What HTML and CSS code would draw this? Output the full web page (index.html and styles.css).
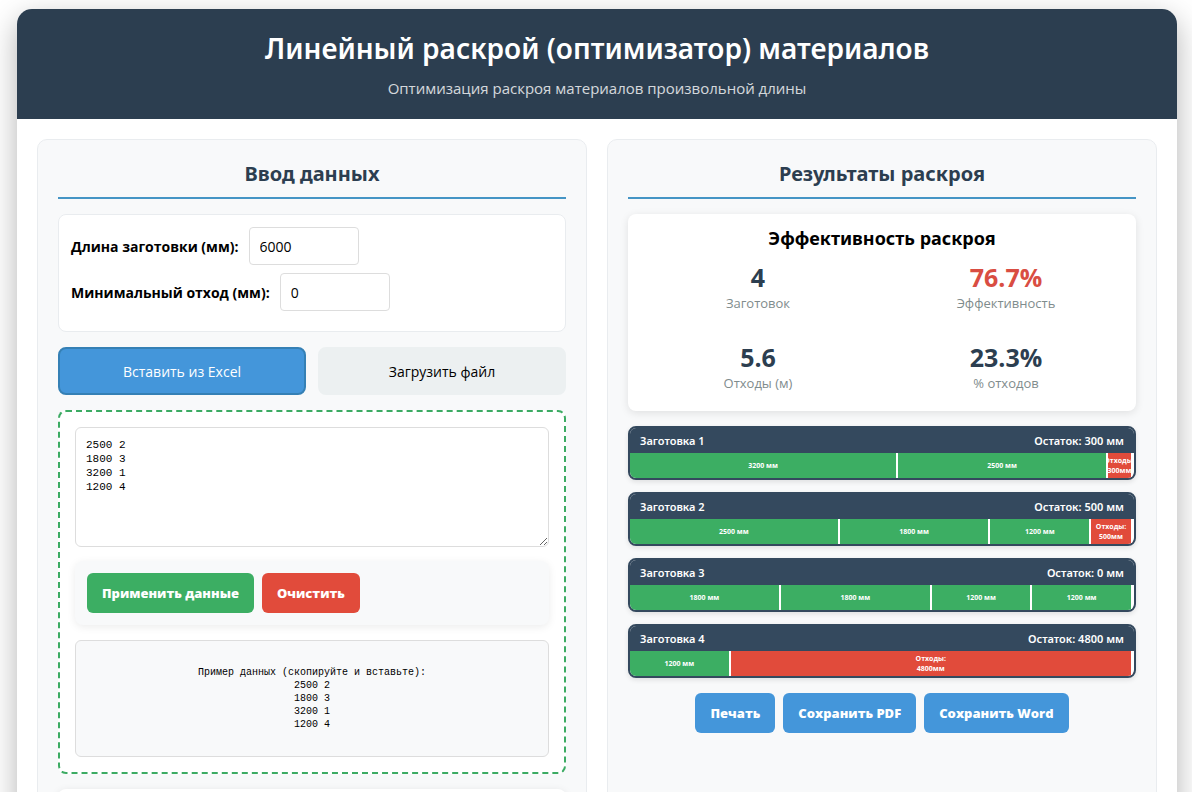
FILE: index.html
```html
<!DOCTYPE html>
<html lang="ru">

<head>
    <meta charset="UTF-8">
    <meta name="viewport" content="width=device-width, initial-scale=1.0">
    <title>Линейный раскрой материалов</title>
    <link rel="stylesheet" href="styles.css">
</head>

<body>
    <div class="container">
        <header class="header">
            <h1>Линейный раскрой (оптимизатор) материалов</h1>
            <p>Оптимизация раскроя материалов произвольной длины</p>
        </header>
        <main class="content">
            <section class="panel">
                <h2>Ввод данных</h2>
                <div class="settings">
                    <div class="setting">
                        <label for="stockLength">Длина заготовки (мм):</label>
                        <input type="text" inputmode="numeric" id="stockLength" value="6000">
                    </div>
                    <div class="setting">
                        <label for="minWaste">Минимальный отход (мм):</label>
                        <input type="text" inputmode="numeric" id="minWaste" value="0">
                    </div>
                </div>
                <div class="tabs">
                    <button type="button" class="tab active">Вставить из Excel</button>
                    <button type="button" class="tab">Загрузить файл</button>
                </div>
                <div class="paste-area">
                    <textarea id="excelData" aria-label="Данные из Excel">2500 2
1800 3
3200 1
1200 4</textarea>
                    <div class="controls">
                        <button type="button" class="btn btn-green">Применить данные</button>
                        <button type="button" class="btn btn-red">Очистить</button>
                    </div>
                    <pre class="example">Пример данных (скопируйте и вставьте):
2500 2
1800 3
3200 1
1200 4</pre>
                </div>
                <div class="parts"></div>
            </section>

            <section class="panel">
                <h2>Результаты раскроя</h2>
                <div class="stats">
                    <h3>Эффективность раскроя</h3>
                    <div class="stats-grid">
                        <div class="stat">
                            <div class="stat-value">4</div>
                            <div class="stat-label">Заготовок</div>
                        </div>
                        <div class="stat">
                            <div class="stat-value bad">76.7%</div>
                            <div class="stat-label">Эффективность</div>
                        </div>
                        <div class="stat">
                            <div class="stat-value">5.6</div>
                            <div class="stat-label">Отходы (м)</div>
                        </div>
                        <div class="stat">
                            <div class="stat-value">23.3%</div>
                            <div class="stat-label">% отходов</div>
                        </div>
                    </div>
                </div>

                <div class="stock">
                    <div class="stock-header"><span>Заготовка 1</span><span>Остаток: 300 мм</span></div>
                    <div class="stock-bar">
                        <div class="piece" style="width: 53.33%">3200 мм</div>
                        <div class="piece" style="width: 41.67%">2500 мм</div>
                        <div class="piece waste" style="width: 5%">Отходы:<br>300мм</div>
                    </div>
                </div>
                <div class="stock">
                    <div class="stock-header"><span>Заготовка 2</span><span>Остаток: 500 мм</span></div>
                    <div class="stock-bar">
                        <div class="piece" style="width: 41.67%">2500 мм</div>
                        <div class="piece" style="width: 30%">1800 мм</div>
                        <div class="piece" style="width: 20%">1200 мм</div>
                        <div class="piece waste" style="width: 8.33%">Отходы:<br>500мм</div>
                    </div>
                </div>
                <div class="stock">
                    <div class="stock-header"><span>Заготовка 3</span><span>Остаток: 0 мм</span></div>
                    <div class="stock-bar">
                        <div class="piece" style="width: 30%">1800 мм</div>
                        <div class="piece" style="width: 30%">1800 мм</div>
                        <div class="piece" style="width: 20%">1200 мм</div>
                        <div class="piece" style="width: 20%">1200 мм</div>
                    </div>
                </div>
                <div class="stock">
                    <div class="stock-header"><span>Заготовка 4</span><span>Остаток: 4800 мм</span></div>
                    <div class="stock-bar">
                        <div class="piece" style="width: 20%">1200 мм</div>
                        <div class="piece waste" style="width: 80%">Отходы:<br>4800мм</div>
                    </div>
                </div>

                <div class="export">
                    <button type="button" class="btn">Печать</button>
                    <button type="button" class="btn">Сохранить PDF</button>
                    <button type="button" class="btn">Сохранить Word</button>
                </div>
            </section>
        </main>
    </div>
</body>

</html>
```
FILE: styles.css
```css
* {
    box-sizing: border-box;
    margin: 0;
    padding: 0;
}

body {
    padding: 9px 15px 20px 17px;
    font-family: "Open Sans", "Noto Sans", sans-serif;
    font-size: 14px;
    color: #000;
    background: #fff;
}

h1,
h2,
h3,
.stock-header {
    font-family: "Noto Sans", "Open Sans", sans-serif;
}

button,
input {
    font-family: inherit;
}

.container {
    background: #fff;
    border-radius: 15px;
    box-shadow: 0 10px 30px rgba(0, 0, 0, 0.3);
    overflow: hidden;
}

.header {
    padding: 20px;
    background: #2c3e50;
    color: #fff;
    text-align: center;
}

.header h1 {
    margin-bottom: 10px;
    font-size: 28px;
    line-height: 38px;
    font-weight: 600;
}

.header p {
    font-size: 15px;
    line-height: 22px;
    opacity: 0.8;
}

.content {
    display: grid;
    grid-template-columns: 1fr 1fr;
    gap: 20px;
    padding: 20px;
}

.panel {
    padding: 20px;
    background: #f8f9fa;
    border: 1px solid #e9ecef;
    border-radius: 10px;
}

.panel h2 {
    margin-bottom: 15px;
    padding-bottom: 10px;
    border-bottom: 2px solid #4595c5;
    font-size: 20px;
    line-height: 27px;
    color: #2c3e50;
    text-align: center;
}

.settings {
    margin-bottom: 15px;
    padding: 12px;
    background: #fff;
    border: 1px solid #e9ecef;
    border-radius: 8px;
}

.setting {
    display: flex;
    align-items: center;
    gap: 10px;
    margin-bottom: 8px;
}

.setting label {
    font-weight: bold;
}

.setting input {
    width: 110px;
    height: 38px;
    padding: 0 10px;
    border: 1px solid #ddd;
    border-radius: 4px;
    font-size: 14px;
}

.tabs {
    display: flex;
    gap: 12px;
    margin-bottom: 15px;
}

.tab {
    flex: 1;
    height: 48px;
    border: 2px solid #ecf0f1;
    border-radius: 8px;
    background: #ecf0f1;
    font-size: 14px;
    color: #000;
    cursor: pointer;
}

.tab.active {
    background: #4496da;
    border-color: #3580b5;
    color: #fff;
}

.paste-area {
    margin-bottom: 15px;
    padding: 15px;
    background: #fff;
    border: 2px dashed #3cab63;
    border-radius: 8px;
}

.paste-area textarea {
    display: block;
    width: 100%;
    height: 120px;
    padding: 10px;
    border: 1px solid #ddd;
    border-radius: 6px;
    font-family: "Liberation Mono", monospace;
    font-size: 11px;
    line-height: 14px;
    resize: vertical;
}

.controls {
    display: flex;
    gap: 8px;
    margin: 14px 0 15px;
    padding: 12px;
    background: #f8f9fa;
    border-radius: 8px;
    box-shadow: 0 2px 8px rgba(0, 0, 0, 0.08);
}

.btn {
    height: 40px;
    padding: 0 15px;
    border: none;
    border-radius: 6px;
    background: #4496da;
    font-size: 13px;
    font-weight: 800;
    color: #fff;
    cursor: pointer;
}

.btn-green {
    background: #3cae63;
}

.btn-red {
    background: #e14b3b;
}

.example {
    padding: 25px;
    background: #f8f9fa;
    border: 1px solid #ddd;
    border-radius: 6px;
    font-family: "Liberation Mono", monospace;
    font-size: 10px;
    line-height: 13px;
    text-align: center;
}

.parts {
    min-height: 60px;
    background: #fff;
    border-radius: 8px;
    box-shadow: 0 2px 8px rgba(0, 0, 0, 0.1);
}

.stats {
    margin-bottom: 15px;
    padding: 12px;
    background: #fff;
    border-radius: 8px;
    box-shadow: 0 2px 8px rgba(0, 0, 0, 0.1);
    text-align: center;
}

.stats h3 {
    font-size: 18px;
    line-height: 25px;
}

.stats-grid {
    display: grid;
    grid-template-columns: 1fr 1fr;
    gap: 12px;
}

.stat {
    padding: 8px;
}

.stat-value {
    font-size: 25px;
    line-height: 36px;
    font-weight: bold;
    color: #2c3e50;
}

.stat-value.bad {
    color: #d94d42;
}

.stat-label {
    font-size: 13px;
    line-height: 16px;
    color: #7f8c8d;
}

.stock {
    margin-bottom: 12px;
    border: 2px solid #34495e;
    border-radius: 8px;
    background: #fff;
    box-shadow: 0 2px 5px rgba(0, 0, 0, 0.1);
    overflow: hidden;
}

.stock-header {
    display: flex;
    justify-content: space-between;
    padding: 0 10px;
    background: #34495e;
    font-size: 11px;
    line-height: 25px;
    font-weight: 600;
    color: #fff;
}

.stock-bar {
    display: flex;
    height: 25px;
    padding-right: 1px;
}

.piece {
    display: flex;
    align-items: center;
    justify-content: center;
    border-right: 2px solid #fff;
    background: #3cae63;
    font-size: 7px;
    line-height: 10px;
    font-weight: bold;
    color: #fff;
    text-align: center;
    white-space: nowrap;
    overflow: hidden;
}

.piece.waste {
    background: #e14b3b;
}

.export {
    display: flex;
    justify-content: center;
    gap: 8px;
    margin-top: 15px;
}
```
